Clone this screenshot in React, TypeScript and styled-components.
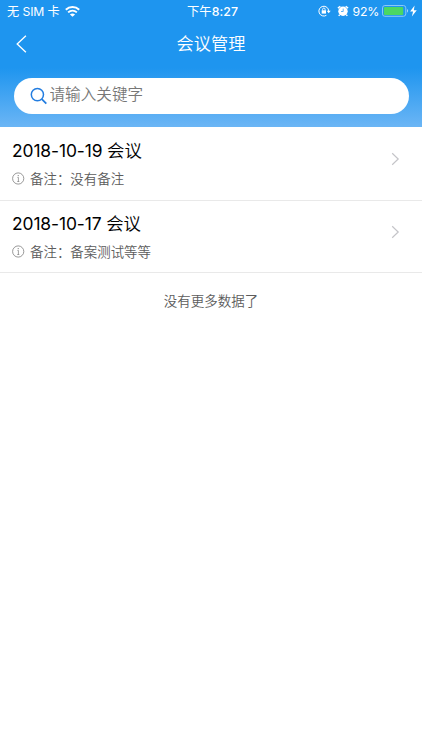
import React from "react";
import styled, { createGlobalStyle } from "styled-components";

const GlobalStyle = createGlobalStyle`
  * { box-sizing: border-box; }
  html, body { margin: 0; background: #fff; }
  body { font-family: Inter, "Noto Sans CJK SC", sans-serif; }
`;

const Screen = styled.div`
  width: 100%;
  height: 750px;
  overflow: hidden;
  background: #fff;
`;

const Header = styled.header`
  height: 126.5px;
  background: linear-gradient(#1e95ef 0, #1e95ef 68px, #6ab5f5 126px);
  color: #fff;
`;

const StatusBar = styled.div`
  height: 22px;
  display: grid;
  grid-template-columns: 1fr auto 1fr;
  align-items: center;
  padding: 0 4px 0 7px;
  font-size: 12.4px;
  line-height: 21px;
  white-space: nowrap;
`;

const StatusGroup = styled.div<{ $end?: boolean }>`
  display: flex;
  align-items: center;
  justify-content: ${(p) => (p.$end ? "flex-end" : "flex-start")};
  svg { display: block; flex: none; }
`;

const Carrier = styled.span`
  width: 53px;
  margin-right: 5px;
  font-size: 12.2px;
  letter-spacing: -0.1px;
`;

const Clock = styled.span`
  font-size: 12.3px;
  letter-spacing: 0.05px;
  b { font-weight: 500; }
`;

const Percent = styled.span`
  margin: 0 3px 0 4px;
  font-size: 12.3px;
  letter-spacing: -0.25px;
`;

const NavBar = styled.div`
  height: 43px;
  display: grid;
  grid-template-columns: 44px 1fr 44px;
  align-items: center;
`;

const BackButton = styled.button`
  height: 43px;
  padding: 0 0 0 15px;
  border: 0;
  background: none;
  display: flex;
  align-items: center;
`;

const Title = styled.h1`
  margin: 0;
  text-align: center;
  font-weight: 350;
  font-size: 17.2px;
  line-height: 42px;
`;

const SearchBox = styled.label`
  height: 36px;
  margin: 13px 13.5px 0;
  padding: 0 16px;
  border-radius: 18px;
  background: #fff;
  display: flex;
  align-items: center;
  svg { flex: none; }
`;

const SearchInput = styled.input`
  flex: 1;
  min-width: 0;
  height: 30px;
  margin: 0 0 4px 2px;
  padding: 0;
  border: 0;
  outline: 0;
  background: none;
  font: 350 15.6px Inter, "Noto Sans CJK SC", sans-serif;
  &::placeholder { color: #777; opacity: 1; }
`;

const MeetingRow = styled.article`
  height: 72.5px;
  padding: 10.5px 22px 0 12px;
  border-bottom: 1px solid #e9e9e9;
  display: flex;
  justify-content: space-between;
  &:first-child { height: 74px; padding-top: 11.5px; }
`;

const MeetingTitle = styled.h2`
  margin: 0;
  font-weight: 350;
  font-size: 17.4px;
  line-height: 26px;
  letter-spacing: -0.08px;
  color: #000;
  time { font-weight: 400; letter-spacing: -0.1px; }
`;

const Note = styled.p`
  margin: 3.5px 0 0;
  display: flex;
  align-items: center;
  gap: 5px;
  font-size: 13.45px;
  font-weight: 350;
  line-height: 22px;
  color: #5c5c5c;
`;

const Arrow = styled.svg`
  margin-top: 14px;
  flex: none;
`;

const Footer = styled.p`
  margin: 17px 0 0;
  text-align: center;
  font-size: 13.5px;
  font-weight: 350;
  line-height: 22px;
  color: #5c5c5c;
`;

const WifiIcon = () => (
  <svg width="15" height="11" viewBox="0 0 15 11" fill="none" stroke="#fff">
    <path d="M.8 3.8C4.6.2 10.4.2 14.2 3.8" strokeWidth="2" />
    <path d="M3.1 6.4c2.6-2.3 6.2-2.3 8.8 0" strokeWidth="1.9" />
    <path d="M7.5 10.7 4.9 8.4c1.5-1.3 3.7-1.3 5.2 0z" fill="#fff" stroke="none" />
  </svg>
);

const LockIcon = () => (
  <svg width="13" height="12" viewBox="0 0 13 12" fill="none" stroke="#fff">
    <path d="M8.4 10.3A4.9 4.9 0 1 1 10.7 6" strokeWidth="1" />
    <path d="M8.7 5.8h4L10.7 8.3z" fill="#fff" stroke="none" />
    <rect x="3.7" y="5.3" width="4.3" height="3.3" fill="#fff" stroke="none" />
    <path d="M4.6 5.5V4.3a1.25 1.25 0 0 1 2.5 0v1.2" strokeWidth=".9" />
  </svg>
);

const AlarmIcon = () => (
  <svg width="12" height="12" viewBox="0 0 12 12" fill="none" stroke="#fff">
    <circle cx="6" cy="6.2" r="4.7" fill="#fff" stroke="none" />
    <path d="M.9 3.1 3.3 1.2M8.7 1.2l2.4 1.9M2.7 9.7l-1 1.2M9.3 9.7l1 1.2" strokeWidth="1.4" />
    <path d="M6.2 3.6v2.9H4" stroke="#1e95ef" strokeWidth=".7" />
  </svg>
);

const BatteryIcon = () => (
  <svg width="27" height="12" viewBox="0 0 27 12" fill="none">
    <rect x=".5" y=".5" width="23.3" height="10.8" rx="2.4" stroke="#8ac8f8" />
    <rect x="1.9" y="1.9" width="19.3" height="8" rx="1" fill="#4bd763" />
    <path d="M25 4.1c1.5.6 1.5 3 0 3.6z" fill="#a0d2fa" />
  </svg>
);

const BoltIcon = () => (
  <svg width="9" height="12" viewBox="0 0 8 11">
    <path d="M5 .5.9 6h2.7l-1.1 4.5L7 4.7H4.3z" fill="#fff" />
  </svg>
);

const BackIcon = () => (
  <svg width="13" height="18" viewBox="0 0 13 18" fill="none">
    <path d="M10.9.7 2.2 9l8.7 8.3" stroke="#fff" strokeWidth="1.35" />
  </svg>
);

const SearchIcon = () => (
  <svg width="18" height="18" viewBox="0 0 18 18" fill="none" stroke="#237de0" strokeWidth="1.5">
    <circle cx="7.4" cy="7.6" r="6.1" />
    <path d="m11.8 12.1 4.5 4.5" strokeWidth="1.8" />
  </svg>
);

const InfoIcon = () => (
  <svg width="13" height="13" viewBox="0 0 13 13" fill="none" stroke="#777" strokeWidth=".75">
    <circle cx="6.2" cy="6.5" r="5.6" />
    <path d="M5.4 5.4h1v4.1M5.3 9.5h2" strokeWidth=".7" />
    <circle cx="6.2" cy="3.6" r=".6" fill="#777" stroke="none" />
  </svg>
);

const meetings = [
  { date: "2018-10-19", note: "没有备注" },
  { date: "2018-10-17", note: "备案测试等等" },
];

export default function App() {
  return (
    <Screen>
      <GlobalStyle />
      <Header>
        <StatusBar>
          <StatusGroup>
            <Carrier>无 SIM 卡</Carrier>
            <WifiIcon />
          </StatusGroup>
          <Clock>下午<b>8:27</b></Clock>
          <StatusGroup $end>
            <LockIcon />
            <Spacer />
            <AlarmIcon />
            <Percent>92%</Percent>
            <BatteryIcon />
            <BoltIcon />
          </StatusGroup>
        </StatusBar>
        <NavBar>
          <BackButton aria-label="返回"><BackIcon /></BackButton>
          <Title>会议管理</Title>
        </NavBar>
        <SearchBox>
          <SearchIcon />
          <SearchInput placeholder="请输入关键字" />
        </SearchBox>
      </Header>
      <main>
        {meetings.map((m) => (
          <MeetingRow key={m.date}>
            <div>
              <MeetingTitle><time>{m.date}</time> 会议</MeetingTitle>
              <Note><InfoIcon /><span>备注：{m.note}</span></Note>
            </div>
            <Arrow width="9" height="14" viewBox="0 0 9 14" fill="none">
              <path d="m1.2 1.3 6 5.7-6 5.7" stroke="#c4c4c8" strokeWidth="1.2" />
            </Arrow>
          </MeetingRow>
        ))}
        <Footer>没有更多数据了</Footer>
      </main>
    </Screen>
  );
}

const Spacer = styled.span`
  width: 6px;
`;
